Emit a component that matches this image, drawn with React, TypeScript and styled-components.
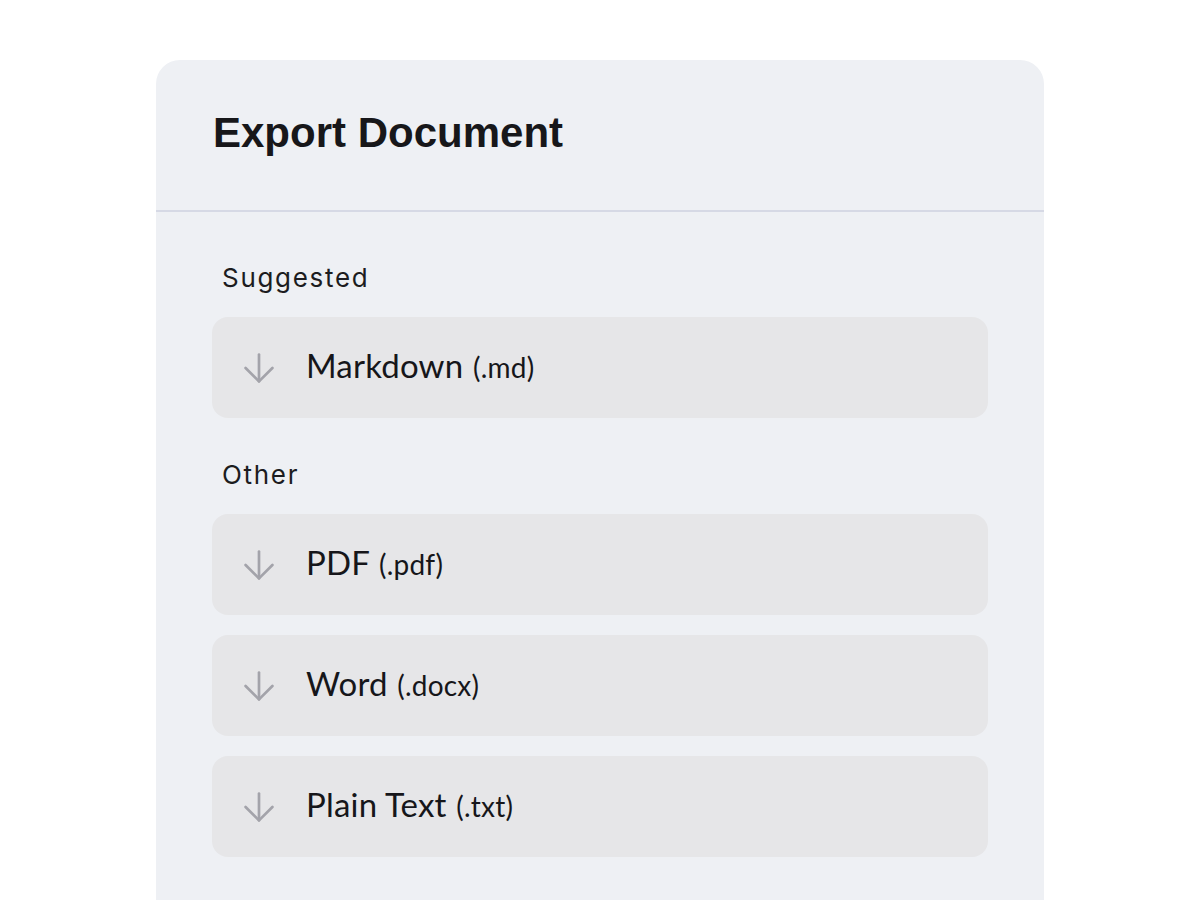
import React from 'react';
import styled, { createGlobalStyle } from 'styled-components';
import { ArrowDown } from 'lucide-react';

const GlobalStyle = createGlobalStyle`
  body {
    margin: 0;
    background: #ffffff;
    font-family: "Inter", "Liberation Sans", sans-serif;
  }
`;

const Page = styled.div`
  height: 900px;
  overflow: hidden;
  padding: 60px 0 0 156px;
  box-sizing: border-box;
`;

const Card = styled.section`
  width: 888px;
  min-height: 900px;
  background: #eef0f4;
  border-radius: 24px 24px 0 0;
`;

const Header = styled.header`
  height: 152px;
  box-sizing: border-box;
  border-bottom: 2px solid #d6d9e5;
  padding: 0 56px 0 57px;
  display: flex;
  align-items: center;
`;

const Title = styled.h1`
  margin: 0 0 4px 0;
  font-family: "Liberation Sans", Arial, sans-serif;
  font-weight: 700;
  font-size: 42px;
  color: #17171a;
`;

const Body = styled.div`
  padding: 50px 56px 0;
  display: flex;
  flex-direction: column;
`;

const SectionLabel = styled.div<{ $first?: boolean }>`
  margin: ${(p) => (p.$first ? '0' : '41px')} 0 23px 10px;
  font-size: 26px;
  line-height: 32px;
  letter-spacing: 1.7px;
  color: #1c1c20;
`;

const List = styled.div`
  display: flex;
  flex-direction: column;
  gap: 20px;
`;

const Option = styled.button`
  display: flex;
  align-items: center;
  gap: 24px;
  height: 101px;
  padding: 0 0 0 24px;
  border: none;
  border-radius: 16px;
  background: #e6e6e8;
  cursor: pointer;
  text-align: left;
  color: #16161a;
  svg {
    color: #a3a3aa;
    flex-shrink: 0;
  }
`;

const Name = styled.span`
  margin-bottom: 5px;
  font-family: "Lato", "Noto Sans", sans-serif;
  font-size: 33px;
  letter-spacing: 0.2px;
`;

const Ext = styled.span`
  font-size: 28px;
  margin-left: 1px;
`;

const formats = {
  suggested: [{ name: 'Markdown', ext: '(.md)' }],
  other: [
    { name: 'PDF', ext: '(.pdf)' },
    { name: 'Word', ext: '(.docx)' },
    { name: 'Plain Text', ext: '(.txt)' },
  ],
};

function FormatOption({ name, ext }: { name: string; ext: string }) {
  return (
    <Option type="button">
      <ArrowDown size={46} strokeWidth={1.4} />
      <Name>
        {name} <Ext>{ext}</Ext>
      </Name>
    </Option>
  );
}

export default function App() {
  return (
    <>
      <GlobalStyle />
      <Page>
        <Card>
          <Header>
            <Title>Export Document</Title>
          </Header>
          <Body>
            <SectionLabel $first>Suggested</SectionLabel>
            <List>
              {formats.suggested.map((f) => (
                <FormatOption key={f.name} {...f} />
              ))}
            </List>
            <SectionLabel>Other</SectionLabel>
            <List>
              {formats.other.map((f) => (
                <FormatOption key={f.name} {...f} />
              ))}
            </List>
          </Body>
        </Card>
      </Page>
    </>
  );
}
